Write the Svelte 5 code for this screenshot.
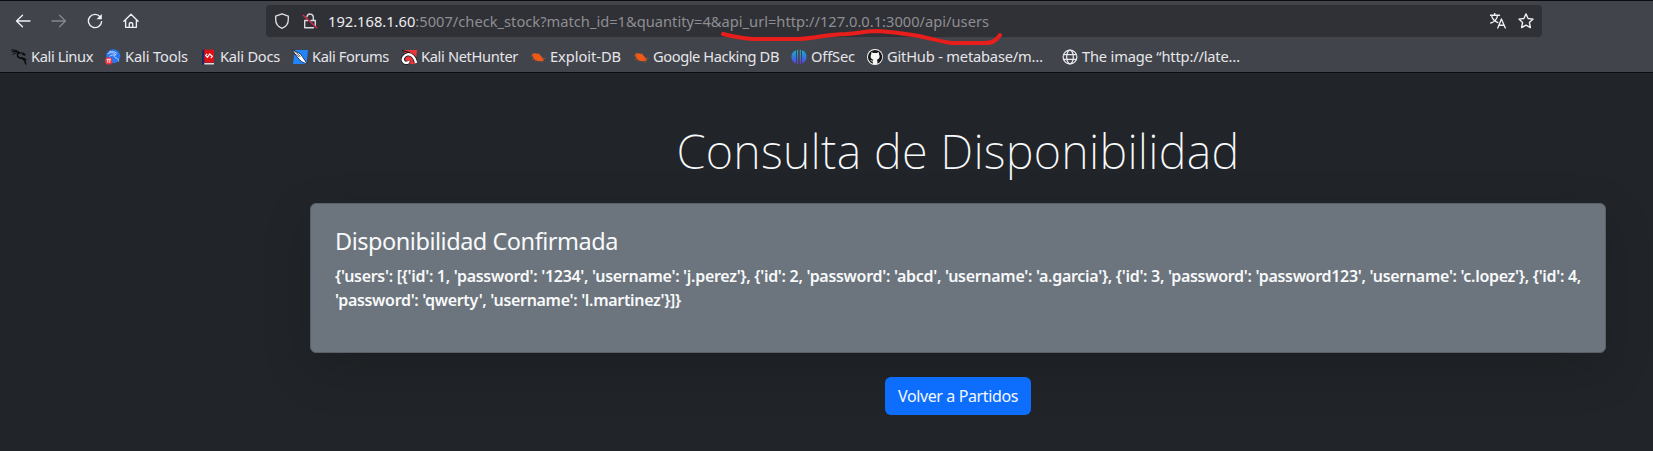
<script>
  const bookmarks = [
    { icon: 'dragon', label: 'Kali Linux', gap: 12, width: 62 },
    { icon: 'tools', label: 'Kali Tools', gap: 12, width: 63 },
    { icon: 'docs', label: 'Kali Docs', gap: 12, width: 60 },
    { icon: 'forums', label: 'Kali Forums', gap: 12, width: 77 },
    { icon: 'hunter', label: 'Kali NetHunter', gap: 12, width: 97 },
    { icon: 'bug', label: 'Exploit-DB', gap: 12, width: 71 },
    { icon: 'bug', label: 'Google Hacking DB', gap: 12, width: 126 },
    { icon: 'offsec', label: 'OffSec', gap: 12, width: 44 },
    { icon: 'github', label: 'GitHub - metabase/m…', gap: 19, width: 156 },
    { icon: 'globe', label: 'The image “http://late…', gap: 0, width: 158 }
  ];

  // Spreads a single line of text evenly over the given width.
  function fit(node, width) {
    const n = [...node.textContent].length;
    const natural = node.getBoundingClientRect().width;
    node.style.letterSpacing = (width - natural) / n + 'px';
  }
</script>

{#snippet glyph(name)}
  <svg class="mark" viewBox="0 0 16 16" aria-hidden="true">
    {#if name === 'dragon'}
      <g fill="none" stroke="#08090b" stroke-linecap="round" stroke-linejoin="round">
        <path d="M.5 1C4 .8 6.500 1.500 8.500 3.500M1.200 3C4 2 6 2.300 8 3.700M2 5.300C4 3.800 6 3.400 8.200 4" stroke-width="1" />
        <path d="M7.500 4c-2 2.200-1 4.500 1.800 5 2.900.3 4.700 1.700 5.400 6" stroke-width="1.500" />
        <path d="M8.500 4c2.200-.6 4.300 0 5.600 1.900l-2.500-.4M10 9.200c2-.4 3.800 0 5 1.700" stroke-width="1.200" />
      </g>
    {:else if name === 'tools'}
      <circle cx="8.200" cy="7.300" r="7" fill="#2876f2" />
      <path d="M2.500 5c4-2.500 7.500-1 8.500.8-2.500.4-3 2 .3 3.200 1.500.6 2.200 1.800 2.300 3.500M4.500 7.300c2-1.500 4-1.600 5.500-1M4 3c3-.8 6-.5 8 1.500" fill="none" stroke="#d8e7ff" stroke-width=".8" />
      <circle cx="3.700" cy="11.900" r="3.700" fill="#ef3340" />
      <path d="M1.600 10.300h4.300M2.800 10.300v3.500M4.800 10.300v3.500" stroke="#fff" stroke-width=".9" />
    {:else if name === 'docs'}
      <path d="M2 .6h12v12.800H2z" fill="#de1015" />
      <path d="M2 .6h2.300v15H2z" fill="#172c63" />
      <path d="M4.300 13.800H14v1.700H4.300z" fill="#dcdde0" />
      <path d="M4.300 13.500H14" stroke="#9d1118" stroke-width=".7" />
      <path d="M7.200 4.800 5.700 6.500l1.800 1.800L9.700 5l2.600 2.300-1.500 1.700" fill="none" stroke="#fff" stroke-width="1.200" />
    {:else if name === 'forums'}
      <path d="M3 1h13l-1.500 14H1z" fill="#2283fb" />
      <path d="M0 .5 8.500 5l3.500 5 3.300 5-5.300-2-5-5z" fill="#fff" stroke="#172332" stroke-width=".8" />
      <path d="m1.500 1 7 6.500M2 4.500 7.500 8" stroke="#172332" stroke-width=".7" />
    {:else if name === 'hunter'}
      <path d="M3 1h13l-1.500 14H5z" fill="#ee343d" />
      <path d="m1 1.500 8 2" stroke="#14171b" stroke-width="1.200" />
      <path d="M15 14C14 8 10 4.500 6.500 5.300S.6 10 2.500 12.500s5.500 1 5-.5" fill="none" stroke="#18191c" stroke-width="4" />
      <path d="M15 14C14 8 10 4.500 6.500 5.300S.6 10 2.500 12.500s5.500 1 5-.5" fill="none" stroke="#fff" stroke-width="2.400" />
    {:else if name === 'bug'}
      <path d="M2 5.200C4.500 3.500 9 4.400 11.200 7.300l2.800 3.900c-3.700 1.800-8.500 1-10.500-1.900z" fill="#f15a16" />
      <path d="m3 3.500 2 2M.8 7h4M2 10.500l3-1M5.500 12.500l1-2M12.500 13.500l-1-3M11 9l4.500.5M9 4l.5 2" stroke="#b95a35" stroke-width=".7" />
    {:else if name === 'offsec'}
      <defs><linearGradient id="offsec-fill" gradientUnits="userSpaceOnUse" x1="0" y1="0" x2="0" y2="16"><stop stop-color="#16b5bf" /><stop offset=".5" stop-color="#3478dc" /><stop offset="1" stop-color="#6732d9" /></linearGradient></defs>
      <path d="M5 1.300v13.300C2 13.800.4 10.900.4 8S2 2.200 5 1.300zM6 1l1.200-.3v14.600L6 15zM8.800.7 10 1v14l-1.200.3zM11 1.300c3 .9 4.600 3.800 4.600 6.700S14 13.700 11 14.600z" fill="url(#offsec-fill)" />
    {:else if name === 'github'}
      <circle cx="8" cy="8" r="8" fill="#f6f6f6" />
      <path d="M8 .9a7.100 7.100 0 0 0-2.300 13.800v-2.200c-1.400.1-1.800-.9-2.500-1.600 1.200-.2 1.400 1 2.700.7l.4-.9C4.500 10.300 3.500 9.200 3.500 7.300c0-.8.3-1.500.7-2-.2-.7-.1-1.300.1-2 .8 0 1.400.4 2 .8a7 7 0 0 1 3.400 0c.6-.4 1.200-.8 2-.8.2.7.300 1.300.1 2 .4.500.7 1.200.7 2 0 1.900-1 3-2.800 3.400.4.400.6.900.6 1.500v2.500A7.100 7.100 0 0 0 8 .9z" fill="#181717" transform="translate(.1 0)" />
    {:else}
      <g fill="none" stroke="#e8e8ec" stroke-width="1.250">
        <circle cx="8" cy="8" r="6.900" />
        <ellipse cx="8" cy="8" rx="3.300" ry="6.900" />
        <path d="M1.500 5.700h13M1.500 10.300h13" />
      </g>
    {/if}
  </svg>
{/snippet}

<div class="window">
  <header>
    <nav class="toolbar">
      <div class="controls">
        <svg viewBox="0 0 16 16"><path d="M15 8H1.500M7.500 2.200 1.500 8l6 5.800" /></svg>
        <svg class="off" viewBox="0 0 16 16"><path d="M1 8h13.500M8.500 2.200l6 5.800-6 5.800" /></svg>
        <svg viewBox="0 0 16 16"><path d="M13.300 4A6.600 6.600 0 1 0 14.600 8.600" /><path d="M14.800 1v5.300H9.500z" fill="#f4f4f6" stroke="none" /></svg>
        <svg viewBox="0 0 16 16"><path d="M.9 8.300 8 1.200l7.100 7.100M2.600 7v7.300h10.800V7M6.300 14.300v-3.600q0-1 1-1h1.400q1 0 1 1v3.600" /></svg>
      </div>
      <div class="address">
        <svg class="shield" viewBox="0 0 16 16"><path d="M8 .8 14.300 3.200v3.200C14.300 10.500 12 13.700 8 15.300 4 13.700 1.700 10.500 1.700 6.400V3.200z" /></svg>
        <svg class="lock" viewBox="0 0 16 16"><path d="M5 3.500A3.200 3.200 0 0 1 11.300 4v3.500M9 7.500h4.300v5M11.500 14.700H2.700V7.500h3" /><path d="m1.200 2.300 13.600 12.500" stroke="#e22850" /></svg>
        <span class="url" use:fit={661}><b>192.168.1.60</b>:5007/check_stock?match_id=1&amp;quantity=4&amp;api_url=http://127.0.0.1:3000/api/users</span>
        <svg class="translate" viewBox="0 0 16 16"><path d="M0 2.200h9.500M4.700.5v1.700M7.500 2.500C7 6 4 9 .8 10M1.800 3.500C3 6.500 5 8.500 7.700 9.500M7.800 15l3.600-9 3.900 9M9 12.200h5" /></svg>
        <svg viewBox="0 0 16 16"><path d="m8 .9 2.100 4.600 5 .6-3.700 3.400 1 5.100L8 12.100l-4.400 2.500 1-5.100L.9 6.100l5-.6z" /></svg>
        <svg class="scribble" viewBox="0 0 284 18" aria-hidden="true"><path d="M3 5C15 8 23 10 36 10h44C97 9 108 5 126 5c14-1 20-3 32-3 17 1 29 3 41 5 13 3 21 5 32 7h35c8 0 11-4 14-8" /></svg>
      </div>
    </nav>
    <nav class="bookmarks">
      {#each bookmarks as item}
        <a href="#top" style:margin-right="{item.gap}px">
          {@render glyph(item.icon)}
          <span class="slot" style:width="{item.width}px"><span use:fit={item.width}>{item.label}</span></span>
        </a>
      {/each}
    </nav>
  </header>

  <main>
    <h1><span use:fit={563}>Consulta de Disponibilidad</span></h1>
    <section class="card">
      <h2><span use:fit={283}>Disponibilidad Confirmada</span></h2>
      <p>
        <span use:fit={1246}>{"{'users': [{'id': 1, 'password': '1234', 'username': 'j.perez'}, {'id': 2, 'password': 'abcd', 'username': 'a.garcia'}, {'id': 3, 'password': 'password123', 'username': 'c.lopez'}, {'id': 4,"}</span><br />
        <span use:fit={346}>{"'password': 'qwerty', 'username': 'l.martinez'}]}"}</span>
      </p>
    </section>
    <button><span use:fit={120}>Volver a Partidos</span></button>
  </main>
</div>

<style>
  :global(body) { margin: 0; background: #212529; }
  .window {
    box-sizing: border-box;
    height: 451px;
    overflow: hidden;
    display: flex;
    flex-direction: column;
    background: #212529;
    color: #f8f9fa;
    font-family: "Noto Sans", sans-serif;
  }
  span { white-space: nowrap; }
  header {
    box-sizing: border-box;
    height: 73px;
    border-top: 1px solid #0c0c10;
    border-bottom: 1px solid #0c0d11;
    background: #42444c;
  }
  .toolbar { display: flex; height: 40px; align-items: center; }
  .controls { display: flex; gap: 20px; width: 251px; padding-left: 15px; }
  .toolbar svg {
    flex: none;
    width: 16px;
    height: 16px;
    fill: none;
    stroke: #f0f0f4;
    stroke-width: 1.350;
    stroke-linecap: round;
    stroke-linejoin: round;
  }
  .toolbar svg.off { stroke: #85868c; }
  .address {
    position: relative;
    box-sizing: border-box;
    display: flex;
    align-items: center;
    width: 1276px;
    height: 32px;
    padding: 0 8px;
    border-radius: 4px;
    background: #303136;
    color: #8e8e92;
    font-size: 14.670px;
  }
  .address .lock { margin: 0 10px 0 12px; }
  .toolbar .lock, .toolbar .shield { stroke: #dedee2; }
  .url b { font-weight: 400; color: #ededf0; }
  .address .translate { margin: 0 12px 0 auto; }
  .toolbar .scribble {
    position: absolute;
    left: 454px;
    top: 24px;
    width: 284px;
    height: 18px;
    overflow: visible;
    z-index: 1;
    stroke: #e81e1c;
    stroke-width: 4;
  }
  .bookmarks { display: flex; height: 31px; padding-left: 11px; align-items: center; }
  .bookmarks a {
    display: flex;
    align-items: center;
    gap: 4px;
    color: #e6e6e9;
    font-size: 14.670px;
    line-height: 18px;
    text-decoration: none;
  }
  .mark { flex: none; width: 16px; height: 16px; }
  .slot { display: flex; padding-bottom: 2px; }
  main {
    flex: 1;
    display: flex;
    flex-direction: column;
    align-items: center;
    width: 1296px;
    margin-left: 310px;
    padding-top: 49px;
  }
  h1 { margin: 0 0 23px; font-size: 47px; font-weight: 200; line-height: 58px; }
  .card {
    box-sizing: border-box;
    width: 1296px;
    height: 150px;
    padding: 23px 24px;
    border: 1px solid #596068;
    border-radius: 6px;
    background: #6c757d;
    box-shadow: 0 16px 48px rgba(0, 0, 0, 0.175);
  }
  h2 { margin: 0 0 8px; font-size: 23.500px; font-weight: 400; line-height: 29px; }
  p { margin: 0; font-size: 16px; font-weight: 600; line-height: 24px; }
  button {
    margin-top: 24px;
    width: 146px;
    height: 38px;
    padding: 0;
    border: 0;
    border-radius: 6px;
    background: #0d6efd;
    color: #f4f7ff;
    font: 400 16px/24px "Noto Sans", sans-serif;
  }
</style>
